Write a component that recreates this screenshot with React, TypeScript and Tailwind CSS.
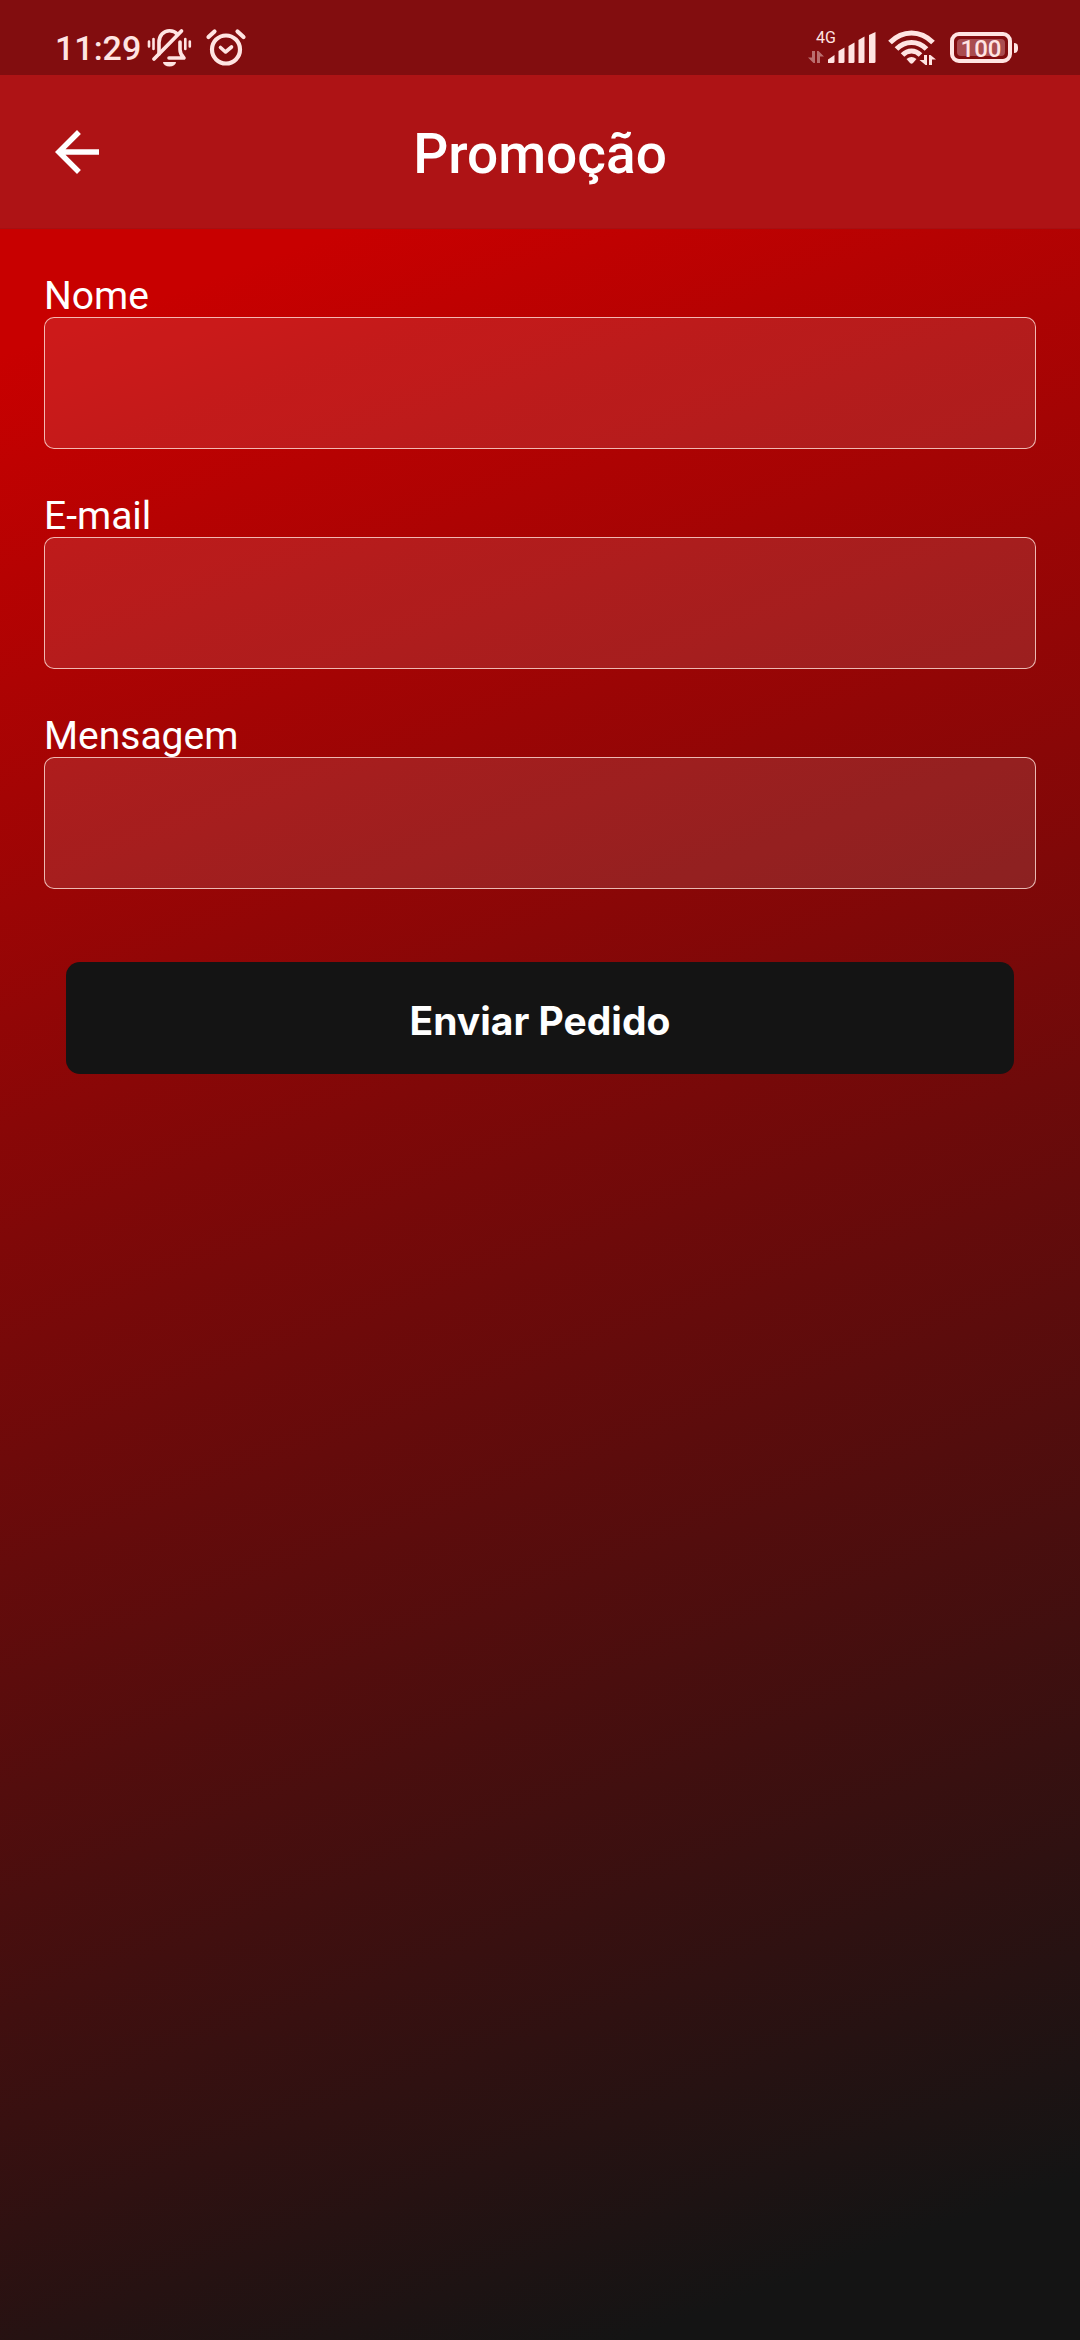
import { useState } from 'react';

interface FieldProps {
  id: string;
  label: string;
  type?: string;
  multiline?: boolean;
}

const boxClass =
  'block h-[132px] w-full resize-none rounded-[10px] border border-[#ffe0d8]/80 bg-white/10 px-6 text-[39px] text-white outline-none';

function Field({ id, label, type = 'text', multiline = false }: FieldProps) {
  const [value, setValue] = useState('');

  return (
    <div>
      <label htmlFor={id} className="block pt-0.5 text-[39px] leading-[42px] text-white">
        {label}
      </label>
      {multiline ? (
        <textarea id={id} className={boxClass} value={value} onChange={(e) => setValue(e.target.value)} />
      ) : (
        <input id={id} type={type} className={boxClass} value={value} onChange={(e) => setValue(e.target.value)} />
      )}
    </div>
  );
}

function MutedBellIcon() {
  return (
    <svg width="46" height="40" viewBox="0 0 46 40" fill="none" stroke="currentColor" strokeLinecap="round" strokeLinejoin="round">
      <path d="M12 26V14.5C12 7.5 16.5 2.8 22.5 2.8c3.4 0 6 1.2 8 3.4" strokeWidth="3.6" />
      <path d="M33 14v7.5c0 3.500 1 5.500 4 8.500H22" strokeWidth="3.6" />
      <path d="M34.5 3 7 31" strokeWidth="3.8" />
      <path d="M2 13.5v5M6.5 11v10M38.3 11v10M42.8 13.5v5" strokeWidth="2.6" />
      <path d="M16 34h13a6.5 4.5 0 0 1-13 0z" fill="currentColor" stroke="none" />
    </svg>
  );
}

function AlarmIcon() {
  return (
    <svg width="42" height="40" viewBox="0 0 42 40" fill="none" stroke="currentColor" strokeLinecap="round" strokeLinejoin="round">
      <circle cx="21" cy="21.5" r="14" strokeWidth="4.2" />
      <path d="M3.5 9 9.5 3.5M38.5 9 32.5 3.5" strokeWidth="4.2" />
      <path d="m15.5 19.5 5 4.5 6-5" strokeWidth="3.6" />
    </svg>
  );
}

function DataArrows({ className }: { className: string }) {
  return (
    <svg className={className} width="16" height="12" viewBox="0 0 16 12" fill="currentColor">
      <path d="M4 0h3v12H5.5L0 6.5h4z" />
      <path d="M9 12h3V5.5h4L10.5 0H9z" />
    </svg>
  );
}

function SignalIcon() {
  return (
    <svg width="48" height="32" viewBox="0 0 48 32" fill="currentColor">
      <path d="M0 31v-3.5L6.5 23v6.5Q6.5 31 5 31z" />
      <path d="M10.5 31V19l6-3.500v14q0 1.500-1.500 1.500z" />
      <path d="M20.5 31V14l6-3.500v19q0 1.500-1.500 1.500z" />
      <path d="M30.5 31V8l6-3.500v25q0 1.500-1.500 1.500z" />
      <path d="M41 31V3l6.5-3v29.5q0 1.500-1.500 1.500z" />
    </svg>
  );
}

function WifiIcon() {
  return (
    <svg width="48" height="36" viewBox="0 0 48 36" fill="none" stroke="currentColor">
      <path d="M2 12.5Q11.5 3 23.5 3T45 12.5" strokeWidth="5.2" />
      <path d="M8.5 19Q15 12.5 23.5 12.5T38.5 19" strokeWidth="5.2" />
      <path d="M14.5 25Q18.5 21 23.5 21T32.5 25" strokeWidth="5" />
      <path d="M18.5 29q5-4 10 0l-3.500 4q-1.500 1.500-3 0z" fill="currentColor" stroke="none" />
      <path d="M36 25h3v10h-1.500L31.5 30H36zM41 35h3v-5.500h4L42.5 25H41z" fill="currentColor" stroke="none" />
    </svg>
  );
}

function StatusBar() {
  return (
    <div className="flex h-[75px] items-center bg-[#820d0f] pt-5 pr-[62px] pl-[55px] text-[#ffe4e2]">
      <span className="text-[34px] leading-9 font-medium">11:29</span>
      <div className="ml-1.5 flex items-center gap-3">
        <MutedBellIcon />
        <AlarmIcon />
      </div>
      <div className="ml-auto flex items-center">
        <div className="relative flex">
          <span className="absolute -top-1 left-2 text-[16px] leading-5">4G</span>
          <DataArrows className="mt-[19px] mr-1 opacity-45" />
          <SignalIcon />
        </div>
        <div className="ml-3">
          <WifiIcon />
        </div>
        <div className="ml-[14px] flex items-center gap-[2px]">
          <div className="flex h-[31px] w-[62px] rounded-[9px] border-4 border-current p-[3px]">
            <div className="flex flex-1 items-center justify-center rounded-sm bg-[#a94c4f] pt-0.5 text-[24px] leading-none font-medium">
              100
            </div>
          </div>
          <div className="h-[10px] w-1 rounded-r-sm bg-current" />
        </div>
      </div>
    </div>
  );
}

function Header() {
  return (
    <header className="grid h-[154px] grid-cols-[66px_1fr_66px] items-center border-b border-[#a51113] bg-[#ae1315] px-11">
      <button type="button" aria-label="Voltar" className="text-white">
        <svg width="66" height="66" viewBox="0 0 24 24" fill="currentColor">
          <path d="M20 11H7.83l5.59-5.59L12 4l-8 8 8 8 1.41-1.41L7.83 13H20z" />
        </svg>
      </button>
      <h1 className="pt-1 text-center text-[55px] leading-16 font-medium text-white">Promoção</h1>
    </header>
  );
}

export default function App() {
  return (
    <div className="flex min-h-screen flex-col bg-[linear-gradient(160deg,#c80000_13%,#141414_94%)] font-['Roboto',sans-serif]">
      <StatusBar />
      <Header />
      <form className="flex flex-col gap-11 px-11 pt-11" onSubmit={(e) => e.preventDefault()}>
        <Field id="nome" label="Nome" />
        <Field id="email" label="E-mail" type="email" />
        <Field id="mensagem" label="Mensagem" multiline />
        <button
          type="submit"
          className="mx-[22px] mt-[29px] h-28 rounded-[14px] bg-[#141414] pt-1.5 font-['Inter',sans-serif] text-[39px] font-bold text-white"
        >
          Enviar Pedido
        </button>
      </form>
    </div>
  );
}
